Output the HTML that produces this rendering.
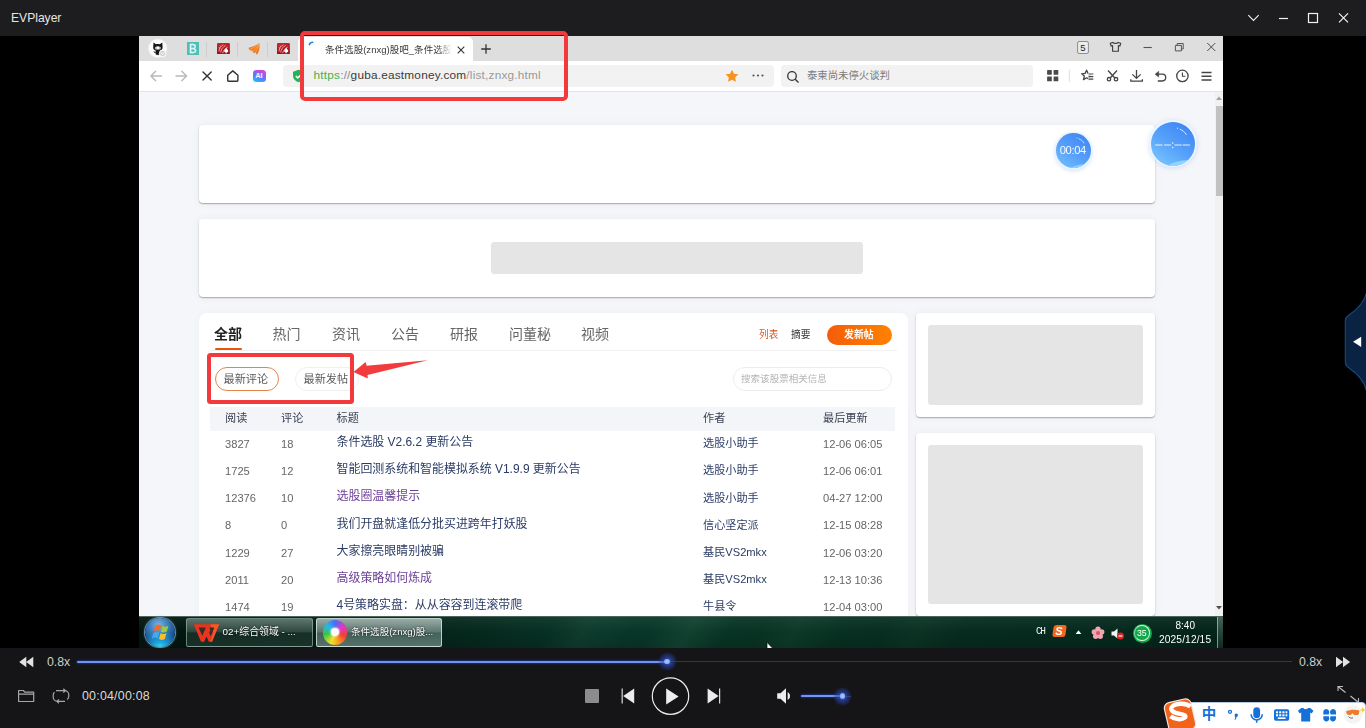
<!DOCTYPE html>
<html><head><meta charset="utf-8"><title>EVPlayer</title>
<style>
*{box-sizing:border-box}
html,body{margin:0;padding:0}
html{overflow:hidden;width:1366px;height:728px}
body{width:1366px;height:728px;overflow:hidden;position:relative;background:#000;font-family:"Liberation Sans","Noto Sans CJK SC",sans-serif;}
.a{position:absolute}
.t{position:absolute;white-space:nowrap;line-height:1}
.b{font-weight:bold}
#titlebar{left:0;top:0;width:1366px;height:36px;background:#1d1d20}
#ctrl{left:0;top:648px;width:1366px;height:80px;background:#151517}
#vid{left:139px;top:36px;width:1083.5px;height:612px;background:#f5f6fa;overflow:hidden}
/* coordinates inside #vid are page coords minus (139,36) -> we use a wrapper shifted back */
#v{position:absolute;left:-139px;top:-36px;width:1366px;height:728px;filter:blur(.4px)}
.card{position:absolute;background:#fff;border-radius:4px;box-shadow:0 1px 1.5px rgba(0,0,0,.32),0 0 10px rgba(0,0,0,.05)}
.sk{position:absolute;background:#e5e5e5;border-radius:3px}
.r{font-size:11.15px;color:#666}
.ti{font-size:11.950px}
.lk{color:#2b3b66}
.vis{color:#6d3f98}
#root{position:absolute;left:0;top:0;width:1366px;height:728px;overflow:hidden}
</style></head><body><div id="root">
<!-- ===== player title bar ===== -->
<div class="a" id="titlebar"></div>
<div class="t" style="left:11.300px;top:11px;font-size:13px;color:#e6e6e6;transform:scaleX(.93);transform-origin:0 0">EVPlayer</div>
<svg class="a" style="left:1240px;top:6px" width="120" height="24" viewBox="1240 6 120 24" fill="none" stroke="#f2f2f2"><path d="M1248.300 15.200l5.200 5.200 5.200-5.200" stroke-width="1.100"/><path d="M1279 18.500h9" stroke-width="1.200"/><rect x="1308.500" y="13.500" width="9" height="9" stroke-width="1.200"/><path d="M1339 13.300l9 9m0-9l-9 9" stroke-width="1.200"/></svg>

<!-- ===== video area ===== -->
<div class="a" id="vid"><div id="v">
<!-- browser tab bar -->
<div class="a" style="left:133px;top:30px;width:1096px;height:31.500px;background:#dedede"></div>
<!-- active tab -->
<div class="a" style="left:298px;top:37px;width:175px;height:25px;background:#fff;border-radius:5px 5px 0 0"></div>
<!-- toolbar -->
<div class="a" style="left:133px;top:61px;width:1096px;height:31px;background:#fff;border-bottom:1px solid #e3e4e6"></div>
<!-- avatar -->
<svg class="a" style="left:146px;top:37px" width="24" height="23" viewBox="146 37 24 23"><circle cx="157.700" cy="48.300" r="9.300" fill="#fbfbfb" stroke="#ebebeb" stroke-width=".6"/>
<path d="M153.200 47.600l.3-5 2.500 1.700c1.200-.3 2.600-.3 3.800 0l2.500-1.700.3 5c0 1.700-1 2.600-2.600 2.800h-4.200c-1.600-.2-2.600-1.100-2.600-2.800z" fill="#161616"/>
<ellipse cx="157.900" cy="48.100" rx="3" ry="1.900" fill="#bdbdbd"/><ellipse cx="157.900" cy="47.700" rx="1.300" ry="1.200" fill="#fff"/>
<path d="M156 50.200h3.800v3.600c0 .5-.3.800-.8.800h-2.200c-.5 0-.8-.3-.8-.8zM155.800 52.600c-1 .1-1.600-.4-2-1.200" fill="#161616" stroke="#161616" stroke-width=".8"/>
<circle cx="162.600" cy="53.500" r="3.300" fill="#d3d3d3" stroke="#fff" stroke-width=".9"/><path d="M161.100 52.700l1.500 1.700 1.500-1.700" stroke="#fff" stroke-width=".9" fill="none"/></svg>
<!-- B icon -->
<div class="a" style="left:186.700px;top:42.100px;width:12.600px;height:12.900px;background:#50bdb6"></div>
<div class="t" style="left:189.400px;top:43.200px;font-size:12.700px;color:#dcfbf8;transform:scaleX(.92);transform-origin:0 0;-webkit-text-stroke:.35px #dcfbf8">B</div>
<div class="a" style="left:206px;top:42px;width:1px;height:15px;background:#cdcdcd"></div>
<svg class="a" style="left:216.900px;top:42.900px" width="12.900" height="11.600" viewBox="0 0 26 23"><defs><linearGradient id="rg216" x1="0" y1="0" x2="0" y2="1"><stop offset="0" stop-color="#c4252b"/><stop offset="1" stop-color="#96121a"/></linearGradient></defs><rect width="26" height="23" rx="2.200" fill="url(#rg216)"/><path d="M4 17C4.500 10 8 5 13 3.500M7.500 19c1-7 4.500-12 10-14M11.500 20.500c1.500-6 5-10.500 10-12M3.500 9l3 1.500M6 5l2 2.500" stroke="#f3b4b4" stroke-width="1.700" fill="none"/><path d="M18.500 9.500l4 5.500a2.800 2.800 0 0 1-3.200 3.300l.7 2.200h-3l.7-2.200a2.800 2.800 0 0 1-3.200-3.300z" fill="#fff"/></svg>
<div class="a" style="left:237px;top:42px;width:1px;height:15px;background:#cdcdcd"></div>
<svg class="a" style="left:247.500px;top:42px" width="12" height="13" viewBox="247.500 42 12 13"><path d="M258.700 43.200c.9 3.800.2 8-2.100 11.400-1-.6-1.400-1.400-1.600-2.400-.6.500-1.500.6-2.400.2-.5-.5-.7-1.100-.7-1.800-1 .3-2 .1-2.700-.5-.6-.7-1-1.400-1.200-2.300 3.600-.7 7.500-2.300 10.700-4.600z" fill="#ee7a1c"/><path d="M249.300 49.300c3.300-1 6.300-2.800 8.900-5.200M251.900 51.500c2.700-1.800 4.900-4.200 6.300-7M254.700 52.600c1.900-2.500 3.100-5.300 3.600-8.300" stroke="#f8b276" stroke-width=".7" fill="none"/></svg>
<div class="a" style="left:267px;top:42px;width:1px;height:15px;background:#cdcdcd"></div>
<svg class="a" style="left:277.200px;top:42.900px" width="12.900" height="11.600" viewBox="0 0 26 23"><defs><linearGradient id="rg277" x1="0" y1="0" x2="0" y2="1"><stop offset="0" stop-color="#c4252b"/><stop offset="1" stop-color="#96121a"/></linearGradient></defs><rect width="26" height="23" rx="2.200" fill="url(#rg277)"/><path d="M4 17C4.500 10 8 5 13 3.500M7.500 19c1-7 4.500-12 10-14M11.500 20.500c1.500-6 5-10.500 10-12M3.500 9l3 1.500M6 5l2 2.500" stroke="#f3b4b4" stroke-width="1.700" fill="none"/><path d="M18.500 9.500l4 5.500a2.800 2.800 0 0 1-3.200 3.300l.7 2.200h-3l.7-2.200a2.800 2.800 0 0 1-3.200-3.300z" fill="#fff"/></svg>
<!-- tab content -->
<svg class="a" style="left:307px;top:40px" width="10" height="10" viewBox="0 0 10 10"><path d="M2.300 4.600A3.800 3.800 0 0 1 5.800 2.200" stroke="#2f80d8" stroke-width="1.500" fill="none" stroke-linecap="round"/></svg>
<div class="t" style="left:325px;top:42.500px;padding:2px 0 3px;font-size:9.560px;color:#3a3a3a;width:127px;overflow:hidden;-webkit-mask-image:linear-gradient(90deg,#000 88%,transparent 100%)">条件选股(znxg)股吧_条件选股吧</div>
<svg class="a" style="left:456px;top:44.500px" width="10" height="10" viewBox="0 0 10 10"><path d="M1.700 1.700l6.600 6.600m0-6.600l-6.600 6.600" stroke="#333" stroke-width="1.100"/></svg>
<svg class="a" style="left:480px;top:42.500px" width="12" height="12" viewBox="0 0 12 12"><path d="M6 1.200v9.600M1.200 6h9.600" stroke="#333" stroke-width="1.300"/></svg>
<!-- browser window buttons -->
<svg class="a" style="left:1070px;top:38px" width="152" height="20" viewBox="1070 38 152 20" fill="none" stroke="#555" stroke-width="1">
<rect x="1077.600" y="41.500" width="10.800" height="12" rx="1.500" fill="#ececec" stroke="#8e8e8e"/>
<path d="M1110.300 43.300l2.800-.9c.6 1.300 4.200 1.300 4.800 0l2.800.9-.8 2.700-1.500-.4v5.600h-5.800v-5.600l-1.500.4z" stroke="#3c3c3c" stroke-width="1.100"/>
<path d="M1143.500 47.500h8.300" stroke="#555" stroke-width="1.100"/>
<path d="M1175.400 45.400h6v5.500h-6zM1177.200 45.400v-1.900h6v5.500h-1.800" stroke="#555"/>
<path d="M1207.300 43l8 8m0-8l-8 8" stroke="#4a4a4a"/>
</svg>
<div class="t" style="left:1080.300px;top:42.800px;font-size:9.500px;color:#222">5</div>
<!-- nav icons -->
<svg class="a" style="left:148px;top:68px" width="124" height="16" viewBox="0 0 124 16" fill="none" stroke-linecap="round" stroke-linejoin="round">
<path d="M13.500 8h-10.500m4.700-4.800l-4.800 4.800 4.800 4.800" stroke="#b9b9b9" stroke-width="1.400"/>
<path d="M28 8h10.500m-4.700-4.800l4.800 4.800-4.800 4.800" stroke="#b9b9b9" stroke-width="1.400"/>
<path d="M55 3.900l8.200 8.200m0-8.200l-8.200 8.200" stroke="#333" stroke-width="1.400"/>
<path d="M79.700 7.300l5.100-4.400 5.100 4.400v5.300c0 .4-.3.700-.7.700h-8.800c-.4 0-.7-.3-.7-.7z" stroke="#333" stroke-width="1.400"/>
</svg>
<div class="a" style="left:252.500px;top:69.500px;width:13px;height:12.500px;border-radius:3.500px;background:linear-gradient(205deg,#f23cb0 0%,#a456f2 32%,#4a86ff 62%,#1ccfee 100%)"></div>
<div class="t" style="left:255.300px;top:72px;font-size:7.500px;font-weight:bold;color:#eef6ff;letter-spacing:-.3px">AI</div>
<!-- url box -->
<div class="a" style="left:283px;top:65px;width:490.500px;height:22px;background:#f2f2f2;border-radius:4px"></div>
<svg class="a" style="left:291.500px;top:69px" width="13" height="14" viewBox="0 0 13 14"><path d="M6.500 .8l5.500 2v4.200c0 3-2.300 5.200-5.500 6.300-3.200-1.100-5.500-3.300-5.500-6.300v-4.200z" fill="#1fb457"/><path d="M3.800 7l2 2 3.600-3.700" stroke="#fff" stroke-width="1.500" fill="none"/></svg>
<div class="t" id="url" style="left:313.500px;top:69.700px;font-size:11.800px;color:#999;letter-spacing:.21px"><span style="color:#47b04b">https</span><span style="color:#8a8a8a">://</span><span style="color:#3a3a3a">guba.eastmoney.com</span>/list,znxg.html</div>
<svg class="a" style="left:725px;top:69px" width="14" height="14" viewBox="0 0 14 14"><path d="M7 .7l1.950 4 4.400.6-3.200 3.100.8 4.400-3.950-2.100-3.950 2.100.8-4.400-3.200-3.100 4.400-.6z" fill="#f7931e"/></svg>
<svg class="a" style="left:751px;top:73px" width="14" height="5" viewBox="0 0 14 5" fill="#555"><circle cx="2.500" cy="2.500" r="1.100"/><circle cx="7" cy="2.500" r="1.100"/><circle cx="11.500" cy="2.500" r="1.100"/></svg>
<!-- search box -->
<div class="a" style="left:780.500px;top:65px;width:252px;height:22px;background:#f2f2f2;border-radius:4px"></div>
<svg class="a" style="left:786px;top:69.500px" width="14" height="14" viewBox="0 0 14 14" fill="none" stroke="#333" stroke-width="1.300"><circle cx="6" cy="6" r="4.300"/><path d="M9.200 9.200l3.300 3.300"/></svg>
<div class="t" style="left:807px;top:70.600px;font-size:10.360px;color:#7c7c7c">泰柬尚未停火谈判</div>
<!-- right toolbar icons -->
<svg class="a" style="left:1040px;top:64px" width="180" height="24" viewBox="1040 64 180 24" fill="none" stroke="#444" stroke-width="1.300" stroke-linejoin="round">
<g fill="#4a4a4a" stroke="none"><rect x="1047.100" y="70" width="4.700" height="4.700" rx=".4"/><rect x="1053.600" y="70" width="4.700" height="4.700" rx=".4"/><rect x="1047.100" y="76.600" width="4.700" height="4.700" rx=".4"/><rect x="1053.600" y="76.600" width="4.700" height="4.700" rx=".4"/></g>
<path d="M1069.300 69.500v12.500" stroke="#dedede" stroke-width="1"/>
<path d="M1086.600 70.200l1.500 3.200 3.400.4-2.600 2.300.8 3.500-3.100-1.800-3.100 1.800.8-3.500-2.600-2.300 3.400-.4z" stroke-width="1.300"/>
<path d="M1088.200 74h5.300M1088.200 76.600h5.300M1088.200 79.200h5.300" stroke="#fff" stroke-width="2.400"/>
<path d="M1088.600 74h4.700M1088.600 76.600h4.700M1088.600 79.200h4.700" stroke-width="1.200"/>
<circle cx="1109" cy="79.200" r="1.700"/><circle cx="1116" cy="79.200" r="1.700"/><path d="M1110.200 78l6.800-7.500M1114.800 78l-6.800-7.500"/>
<path d="M1136.500 70v8.200m-4.100-3.800l4.100 4 4.100-4M1130.800 79.300v1.900h11.600v-1.900"/>
<path d="M1156.500 74.200h5.800a3.400 3.400 0 0 1 0 6.800h-4.500"/><path d="M1158.700 71.300l-3.600 2.900 3.600 2.900z" fill="#444" stroke-width=".5"/>
<circle cx="1182.400" cy="75.900" r="5.700"/><path d="M1182.400 72.500v3.800h3" stroke-width="1.100"/>
<path d="M1201.500 72.500h10M1201.500 76.300h10M1201.500 80.100h10" stroke-width="1.500"/>
</svg>
<!-- page scrollbar -->
<div class="a" style="left:1215px;top:91.500px;width:12px;height:525px;background:#f1f1f2"></div>
<div class="a" style="left:1215.500px;top:105.500px;width:11px;height:90px;background:#c1c1c1"></div>
<svg class="a" style="left:1215px;top:94px" width="8" height="8" viewBox="0 0 8 8"><path d="M1 6l3-3.500 3 3.500z" fill="#a3a3a3"/></svg>
<svg class="a" style="left:1215px;top:604px" width="8" height="8" viewBox="0 0 8 8"><path d="M1 2l3 3.500 3-3.500z" fill="#505050"/></svg>
<!-- page cards -->
<div class="card" style="left:198.500px;top:125px;width:956px;height:78px"></div>
<div class="card" style="left:198.500px;top:219.200px;width:956px;height:78.300px"></div>
<div class="sk" style="left:490.500px;top:242px;width:372.500px;height:31.500px"></div>
<!-- main list card -->
<div class="a" style="left:198.500px;top:313.200px;width:709px;height:320px;background:#fff;border-radius:8px;box-shadow:0 0 8px rgba(0,0,0,.03)"></div>
<!-- right cards -->
<div class="card" style="left:916px;top:313.200px;width:239px;height:103.800px"></div>
<div class="sk" style="left:928px;top:325px;width:215px;height:80px"></div>
<div class="card" style="left:916px;top:433px;width:239px;height:182.500px"></div>
<div class="sk" style="left:928px;top:445px;width:215px;height:158.500px"></div>
<!-- tabs -->
<div class="t b" style="left:214px;top:326.800px;font-size:14px;color:#222">全部</div>
<div class="t" style="left:272.500px;top:326.800px;font-size:14px;color:#666">热门</div>
<div class="t" style="left:332px;top:326.800px;font-size:14px;color:#666">资讯</div>
<div class="t" style="left:391px;top:326.800px;font-size:14px;color:#666">公告</div>
<div class="t" style="left:450px;top:326.800px;font-size:14px;color:#666">研报</div>
<div class="t" style="left:509px;top:326.800px;font-size:14px;color:#666">问董秘</div>
<div class="t" style="left:581px;top:326.800px;font-size:14px;color:#666">视频</div>
<div class="a" style="left:214.500px;top:347.800px;width:27px;height:2.200px;background:#ea5504;border-radius:1px"></div>
<div class="a" style="left:209.500px;top:350px;width:687px;height:1px;background:#f1f1f1"></div>
<div class="t" style="left:759px;top:330px;font-size:9.700px;color:#e2541a">列表</div>
<div class="t" style="left:791px;top:330px;font-size:9.700px;color:#333">摘要</div>
<div class="a" style="left:826.500px;top:324.500px;width:65.500px;height:20.500px;border-radius:11px;background:linear-gradient(90deg,#f55c0a,#ff8200)"></div>
<div class="t b" style="left:844px;top:329.800px;font-size:9.900px;color:#fff">发新帖</div>
<!-- filter pills -->
<div class="a" style="left:214.500px;top:367px;width:64px;height:23.500px;border-radius:12px;border:1px solid #e8834a;background:#fff"></div>
<div class="t" style="left:223.500px;top:373.500px;font-size:11.150px;color:#5a5a5a">最新评论</div>
<div class="a" style="left:294.500px;top:367px;width:64px;height:23.500px;border-radius:12px;border:1px solid #efefef;background:#fff"></div>
<div class="t" style="left:303.500px;top:373.500px;font-size:11.150px;color:#5a5a5a">最新发帖</div>
<!-- search input -->
<div class="a" style="left:732.500px;top:367px;width:159px;height:23.500px;border-radius:12px;border:1px solid #ececec;background:#fff"></div>
<div class="t" style="left:741px;top:374.200px;font-size:9.560px;color:#b4b4b4">搜索该股票相关信息</div>
<!-- table header -->
<div class="a" style="left:209.500px;top:406.500px;width:685.500px;height:24px;background:#f3f5f8"></div>
<div class="t" style="left:225px;top:413px;font-size:11.150px;color:#3a4152">阅读</div>
<div class="t" style="left:281px;top:413px;font-size:11.150px;color:#3a4152">评论</div>
<div class="t" style="left:336.500px;top:413px;font-size:11.150px;color:#3a4152">标题</div>
<div class="t" style="left:703px;top:413px;font-size:11.150px;color:#3a4152">作者</div>
<div class="t" style="left:823px;top:413px;font-size:11.150px;color:#3a4152">最后更新</div>
<div class="t r" style="left:225px;top:439.1px">3827</div><div class="t r" style="left:281px;top:439.1px">18</div><div class="t r ti lk" style="left:336.500px;top:437.2px">条件选股 V2.6.2 更新公告</div><div class="t r lk" style="left:703px;top:438.3px">选股小助手</div><div class="t r" style="left:823px;top:439.1px">12-06 06:05</div>
<div class="t r" style="left:225px;top:466.2px">1725</div><div class="t r" style="left:281px;top:466.2px">12</div><div class="t r ti lk" style="left:336.500px;top:464.3px">智能回测系统和智能模拟系统 V1.9.9 更新公告</div><div class="t r lk" style="left:703px;top:465.4px">选股小助手</div><div class="t r" style="left:823px;top:466.2px">12-06 06:01</div>
<div class="t r" style="left:225px;top:493.3px">12376</div><div class="t r" style="left:281px;top:493.3px">10</div><div class="t r ti vis" style="left:336.500px;top:491.4px">选股圈温馨提示</div><div class="t r lk" style="left:703px;top:492.5px">选股小助手</div><div class="t r" style="left:823px;top:493.3px">04-27 12:00</div>
<div class="t r" style="left:225px;top:520.4px">8</div><div class="t r" style="left:281px;top:520.4px">0</div><div class="t r ti lk" style="left:336.500px;top:518.5px">我们开盘就逢低分批买进跨年打妖股</div><div class="t r lk" style="left:703px;top:519.6px">信心坚定派</div><div class="t r" style="left:823px;top:520.4px">12-15 08:28</div>
<div class="t r" style="left:225px;top:547.5px">1229</div><div class="t r" style="left:281px;top:547.5px">27</div><div class="t r ti lk" style="left:336.500px;top:545.6px">大家擦亮眼睛别被骗</div><div class="t r lk" style="left:703px;top:546.7px">基民VS2mkx</div><div class="t r" style="left:823px;top:547.5px">12-06 03:20</div>
<div class="t r" style="left:225px;top:574.5px">2011</div><div class="t r" style="left:281px;top:574.5px">20</div><div class="t r ti vis" style="left:336.500px;top:572.6px">高级策略如何炼成</div><div class="t r lk" style="left:703px;top:573.7px">基民VS2mkx</div><div class="t r" style="left:823px;top:574.5px">12-13 10:36</div>
<div class="t r" style="left:225px;top:601.6px">1474</div><div class="t r" style="left:281px;top:601.6px">19</div><div class="t r ti lk" style="left:336.500px;top:599.7px">4号策略实盘：从从容容到连滚带爬</div><div class="t r lk" style="left:703px;top:600.8px">牛县令</div><div class="t r" style="left:823px;top:601.6px">12-04 03:00</div>

<!-- floating timers -->
<div class="a" style="left:1054.600px;top:132.100px;width:37.600px;height:37.600px;border-radius:50%;background:#e9f4ff;box-shadow:0 1px 4px rgba(60,120,220,.22)"></div>
<div class="a" style="left:1055.900px;top:133.400px;width:35px;height:35px;border-radius:50%;background:linear-gradient(215deg,#3f86f4 8%,#57a0fa 55%,#74c2ff 100%);overflow:hidden"><div class="a" style="left:12px;top:30.500px;width:40px;height:16px;border-radius:50%;background:#8ad0ff"></div></div>
<svg class="a" style="left:1055.900px;top:133.400px" width="35" height="35" viewBox="0 0 35 35" fill="none" stroke="#fff"><path d="M23 5.800c2.300.9 4 2.400 5 4.200" stroke-width=".9" opacity=".75" stroke-linecap="round"/><circle cx="21" cy="4.900" r=".5" fill="#fff" stroke="none" opacity=".8"/></svg>
<div class="t" style="left:1059.700px;top:145.300px;font-size:11.200px;color:#f4f9ff;letter-spacing:-.35px">00:04</div>
<div class="a" style="left:1149.300px;top:120px;width:47.400px;height:47.400px;border-radius:50%;background:#edf6ff;box-shadow:0 1px 5px rgba(60,120,220,.22)"></div>
<div class="a" style="left:1151.200px;top:121.800px;width:43.800px;height:43.800px;border-radius:50%;background:linear-gradient(215deg,#3c84f4 8%,#58a3fb 55%,#80ccff 100%);overflow:hidden"><div class="a" style="left:14px;top:38.500px;width:52px;height:20px;border-radius:50%;background:#8fd4ff"></div></div>
<svg class="a" style="left:1151.200px;top:121.800px" width="44" height="44" viewBox="0 0 44 44" fill="none" stroke="#fff"><path d="M4.200 23h7.300M13 23h7.100M23.400 23h7.300M31.700 23h7.300" stroke-width=".9" opacity=".95"/><circle cx="21.700" cy="21" r=".7" fill="#fff" stroke="none"/><circle cx="21.700" cy="25.500" r=".7" fill="#fff" stroke="none"/><path d="M29 7.300c3 1.200 5 3 6.300 5.300" stroke-width="1" opacity=".75" stroke-linecap="round"/><circle cx="26.500" cy="6.200" r=".6" fill="#fff" stroke="none" opacity=".8"/></svg>
<!-- win7 taskbar -->
<div class="a" style="left:133px;top:616px;width:1096px;height:38px;background:linear-gradient(90deg,#04150f 0,#051c15 15%,#06281d 30%,#09382a 44%,#083424 58%,#072d20 74%,#062a1e 88%,#05241a 100%)"></div>
<div class="a" style="left:133px;top:616px;width:1096px;height:38px;background:linear-gradient(118deg,transparent 38%,rgba(120,190,150,.06) 41%,transparent 45%,transparent 47%,rgba(120,190,150,.09) 50.500%,transparent 54%,transparent 57%,rgba(120,190,150,.05) 60%,transparent 64%,transparent 68%,rgba(120,190,150,.04) 71%,transparent 75%),linear-gradient(180deg,rgba(255,255,255,.06) 0,rgba(255,255,255,0) 40%,rgba(0,0,0,.18) 100%)"></div>
<div class="a" style="left:133px;top:616px;width:1096px;height:1px;background:#4d665d"></div>
<!-- start orb -->
<div class="a" style="left:145.300px;top:617.800px;width:29.600px;height:29.600px;border-radius:50%;background:radial-gradient(circle at 50% 105%,#3fe0f5 0,#1aa0d8 22%,rgba(20,100,170,0) 55%),radial-gradient(circle at 45% 25%,#7fb5e0 0,#3a7cba 35%,#184f8c 65%,#0f3d70 100%);box-shadow:0 0 0 1px rgba(150,200,235,.6),0 0 3px 1px rgba(90,160,210,.35)"></div>
<svg class="a" style="left:151.500px;top:621.500px" width="20" height="22" viewBox="0 0 20 22"><path d="M3.200 3.600c2.100-1.500 4.100-1.500 6-.4l-1.500 5.800c-1.900-1.100-3.900-1.100-6 .4z" fill="#f26a2c"/><path d="M10.400 3.900c1.900 1.100 3.900 1.100 6-.4l-1.500 5.800c-2.100 1.500-4.100 1.500-6 .4z" fill="#9bcc3f"/><path d="M1.300 11c2.100-1.500 4.100-1.500 6-.4l-1.500 5.800c-1.900-1.100-3.900-1.100-6 .4z" fill="#46a8ea"/><path d="M8.500 11.300c1.900 1.100 3.900 1.100 6-.4l-1.500 5.800c-2.100 1.500-4.100 1.500-6 .4z" fill="#fcbc2c"/></svg>
<!-- task buttons -->
<div class="a" style="left:186px;top:617.500px;width:126.500px;height:29px;border-radius:2.500px;border:1px solid rgba(160,185,175,.62);background:linear-gradient(180deg,rgba(170,195,185,.5),rgba(110,140,130,.42) 46%,rgba(45,75,66,.42) 52%,rgba(50,80,70,.45))"></div>
<svg class="a" style="left:192px;top:622px" width="30" height="22" viewBox="192 622 30 22"><path d="M193.800 624.300h25.400l-7.200 17.500h-3.200l-2.300-5.400-2.300 5.400h-3.200z" fill="#e8351d"/><path d="M210.500 624.300h8.700l-7.200 17.500h-1.600l3-9z" fill="#f4602a" opacity=".85"/><path d="M198.600 627.500h7.200l-3.500 8.300z" fill="#3a2a28"/><path d="M209.200 627.500h5.200l-3.700 8.700-1.500-3.300 1.200-2.900z" fill="#3a2a28"/></svg>
<div class="t" style="left:222.500px;top:627.100px;font-size:9.900px;color:#fff;text-shadow:0 0 2px #000">02+综合领域 - ...</div>
<div class="a" style="left:315.500px;top:617.500px;width:126.500px;height:29px;border-radius:2.500px;border:1px solid rgba(215,230,225,.8);background:linear-gradient(180deg,rgba(200,215,210,.75),rgba(140,165,158,.65) 48%,rgba(95,125,118,.7) 52%,rgba(120,150,142,.7))"></div>
<div class="a" style="left:322.800px;top:620.200px;width:24.400px;height:24.400px;border-radius:50%;background:conic-gradient(from 0deg,#4a6cf5,#e535c8 55deg,#f2402f 110deg,#f8a51e 165deg,#f2e030 200deg,#35c545 260deg,#25b5ee 315deg,#4a6cf5)"></div>
<div class="a" style="left:331px;top:628.400px;width:8px;height:8px;border-radius:50%;background:#fafafa;box-shadow:0 0 2px 1px rgba(255,255,255,.55)"></div>
<div class="t" style="left:351px;top:627.300px;font-size:9.560px;color:#fff;text-shadow:0 0 2px #000">条件选股(znxg)股...</div>
<!-- tray -->
<div class="t" style="left:1036px;top:625.800px;font-size:10.500px;color:#f2f2f2;font-family:'Liberation Mono',monospace;letter-spacing:-1.5px;transform:scaleX(.9);transform-origin:0 0">CH</div>
<div class="a" style="left:1053px;top:625px;width:12.500px;height:12px;border-radius:2.500px;background:#f4661b;transform:skewX(-8deg)"></div>
<div class="t" style="left:1055.300px;top:625.500px;font-size:11px;font-weight:bold;color:#fff;font-style:italic">S</div>
<svg class="a" style="left:1075px;top:629px" width="7" height="6" viewBox="0 0 7 6"><path d="M.7 5l2.800-3.800 2.800 3.800z" fill="#fff"/></svg>
<svg class="a" style="left:1091px;top:626px" width="14" height="14" viewBox="0 0 14 14"><g fill="#f0a6ae"><circle cx="7" cy="3.300" r="2.700"/><circle cx="3.300" cy="6" r="2.700"/><circle cx="10.700" cy="6" r="2.700"/><circle cx="4.700" cy="10.300" r="2.700"/><circle cx="9.300" cy="10.300" r="2.700"/></g><circle cx="7" cy="7" r="2" fill="#d85a66"/></svg>
<svg class="a" style="left:1110px;top:626px" width="15" height="15" viewBox="0 0 15 15"><path d="M1.500 5.500h2.500l3.500-3v10l-3.500-3h-2.500z" fill="#f2f2f2"/><circle cx="10.500" cy="10" r="3.400" fill="#e02020"/><path d="M8.600 10h3.800" stroke="#fff" stroke-width="1.200"/></svg>
<div class="a" style="left:1132.500px;top:623.500px;width:19px;height:19px;border-radius:50%;background:#12a84a"></div><div class="a" style="left:1134.300px;top:625.300px;width:15.400px;height:15.400px;border-radius:50%;border:1.300px solid #d9f5e3;border-left-color:#7fd7a0"></div>
<div class="t" style="left:1137px;top:628.700px;font-size:8.800px;color:#fff;letter-spacing:-.2px">35</div>
<div class="t" style="left:1175.500px;top:620.500px;font-size:10px;color:#fff">8:40</div>
<div class="t" style="left:1159px;top:634.500px;font-size:10.200px;color:#fff;letter-spacing:.12px">2025/12/15</div>
<div class="a" style="left:1217px;top:617px;width:6px;height:31px;border-left:1px solid rgba(190,215,205,.6);background:linear-gradient(180deg,rgba(120,150,140,.5),rgba(30,60,50,.4))"></div>
<!-- mouse cursor tip -->
<svg class="a" style="left:764px;top:640px" width="12" height="10" viewBox="764 640 12 10"><path d="M767 642.300v7.700h7.300z" fill="#fff" stroke="#0a0a0a" stroke-width=".7"/></svg>

</div></div>

<!-- ===== control bar ===== -->
<div class="a" id="ctrl"></div>
<!-- speed row -->
<svg class="a" style="left:17px;top:654px" width="20" height="16" viewBox="0 0 20 16" fill="#e2e2e2"><path d="M9.300 2.800v10.400l-7.100-5.200zM16.300 2.800v10.400l-7.100-5.200z"/></svg>
<div class="t" style="left:47px;top:655.600px;font-size:12.300px;color:#cfcfcf">0.8x</div>
<div class="a" style="left:77px;top:660.700px;width:1215px;height:1.800px;background:#39393b"></div>
<div class="a" style="left:77px;top:660.700px;width:590px;height:1.900px;background:#7396ea;border-radius:1px;box-shadow:0 0 2px .6px rgba(30,60,180,.9)"></div>
<div class="a" style="left:657.500px;top:652.100px;width:19px;height:19px;border-radius:50%;background:radial-gradient(circle,rgba(70,110,235,.95) 0,rgba(45,80,200,.6) 30%,rgba(35,60,160,.38) 55%,rgba(30,50,140,0) 72%)"></div><div class="a" style="left:664.300px;top:658.900px;width:5.400px;height:5.400px;border-radius:50%;background:radial-gradient(circle,#b6ceff 0,#7ea4f6 70%,#5f88e8 100%)"></div>
<div class="t" style="left:1299px;top:655.600px;font-size:12.300px;color:#cfcfcf">0.8x</div>
<svg class="a" style="left:1333px;top:654px" width="20" height="16" viewBox="0 0 20 16" fill="#e2e2e2"><path d="M3 2.800v10.400l7.100-5.200zM10 2.800v10.400l7.100-5.200z"/></svg>
<!-- bottom row -->
<svg class="a" style="left:14px;top:684px" width="60" height="24" viewBox="14 684 60 24" fill="none" stroke="#a6a6a6" stroke-width="1.200" stroke-linejoin="round"><path d="M18.600 690.500h4.800l1.300 1.600h9v9.400h-15.100zM18.600 694.200h15.100"/><path d="M56 690.600h8.500a4.300 4.300 0 0 1 4.300 4.300v1.300a4.300 4.300 0 0 1-1.600 3.300M65 701.400h-7.500a4.300 4.300 0 0 1-4.300-4.300v-1.900a4.300 4.300 0 0 1 1.300-3.100M63.300 688.700l2.200 1.900-2.200 1.900M59 703.300l-2.200-1.900 2.200-1.900"/></svg>
<div class="t" style="left:82px;top:689.500px;font-size:12.400px;color:#dcdcdc;letter-spacing:.22px">00:04/00:08</div>
<div class="a" style="left:585px;top:689px;width:14px;height:14px;background:#8c8c8c;border-radius:1px"></div>
<svg class="a" style="left:619px;top:686px" width="18" height="20" viewBox="0 0 18 20" fill="#ececec"><rect x="2.600" y="2.500" width="1.100" height="15"/><path d="M15.200 2.500v15l-11-7.500z"/></svg>
<svg class="a" style="left:650px;top:676px" width="40" height="40" viewBox="0 0 40 40"><circle cx="20.500" cy="20.100" r="18.200" fill="none" stroke="#ececec" stroke-width="1.200"/><path d="M16.200 12.400v16l12.400-8z" fill="#efefef"/></svg>
<svg class="a" style="left:705px;top:686px" width="18" height="20" viewBox="0 0 18 20" fill="#ececec"><rect x="14.100" y="2.500" width="1.100" height="15"/><path d="M2.600 2.500v15l11-7.500z"/></svg>
<svg class="a" style="left:775px;top:686px" width="18" height="20" viewBox="0 0 18 20"><path d="M2.200 7.300h3.300l5.500-5v15.400l-5.500-5h-3.300z" fill="#ededed"/><path d="M12.600 6.200c3.200 1 3.200 6.600 0 7.600z" fill="#ededed"/></svg>
<div class="a" style="left:801px;top:695.600px;width:50px;height:1.200px;background:#3d3d3f"></div><div class="a" style="left:801px;top:695.200px;width:41px;height:1.900px;background:#7396ea;border-radius:1px;box-shadow:0 0 2px .6px rgba(30,60,180,.9)"></div>
<div class="a" style="left:832.800px;top:686.600px;width:19px;height:19px;border-radius:50%;background:radial-gradient(circle,rgba(70,110,235,.95) 0,rgba(45,80,200,.6) 30%,rgba(35,60,160,.38) 55%,rgba(30,50,140,0) 72%)"></div><div class="a" style="left:839.600px;top:693.400px;width:5.400px;height:5.400px;border-radius:50%;background:radial-gradient(circle,#b6ceff 0,#7ea4f6 70%,#5f88e8 100%)"></div>
<svg class="a" style="left:1335px;top:684px" width="26" height="20" viewBox="0 0 26 20" fill="none" stroke="#bdbdbd" stroke-width="1.100"><path d="M3 2.500l7.500 6M3 7v-4.500h5M15.500 12l8 6.500M23.500 14v4.500h-5"/></svg>
<!-- sogou ime bar -->
<div class="a" style="left:1176px;top:702px;width:189.500px;height:27px;background:#fff;border:1px solid #b9cbe4;border-radius:3px 4px 0 0"></div>
<div class="a" style="left:1167px;top:700.500px;width:26px;height:30px;border-radius:5px;background:#f2631c;transform:rotate(-13deg);box-shadow:0 0 0 1.200px #fbe3d5"></div>
<svg class="a" style="left:1164px;top:697px" width="34" height="31" viewBox="1164 697 34 31"><path d="M1190.500 706.500c-4-3.300-13.500-3.800-17.500-.6-4.500 3.600 0 6.700 6 7.700 5.500.9 8 2.300 5.500 4.300-3 2.300-10 1.500-14-1.700" fill="none" stroke="#fff" stroke-width="4.300" stroke-linecap="butt"/></svg>
<div class="t b" style="left:1201.800px;top:706.800px;font-size:14.500px;color:#1570d8">中</div>
<svg class="a" style="left:1226px;top:704px" width="140" height="24" viewBox="1226 704 140 24" fill="#1570d8">
<circle cx="1230" cy="711.800" r="1.500" fill="none" stroke="#1570d8" stroke-width="1.300"/><path d="M1234.600 715.300a1.700 1.700 0 1 1 1.900 1.600c0 1.600-.8 2.700-2.200 3.300.7-.9 1-1.800.9-2.900z"/>
<rect x="1253.300" y="707.200" width="6.800" height="11" rx="3.400"/><path d="M1251.100 714.300a5.600 5.600 0 0 0 11.200 0M1256.700 720v2.800" fill="none" stroke="#1570d8" stroke-width="1.500"/>
<rect x="1274" y="709.200" width="15.200" height="11.600" rx="1.800"/><g fill="#fff"><rect x="1276" y="711.300" width="2.100" height="2"/><rect x="1279.200" y="711.300" width="2.100" height="2"/><rect x="1282.400" y="711.300" width="2.100" height="2"/><rect x="1285.600" y="711.300" width="1.700" height="2"/><rect x="1276" y="714.300" width="2.100" height="2"/><rect x="1279.200" y="714.300" width="2.100" height="2"/><rect x="1282.400" y="714.300" width="2.100" height="2"/><rect x="1285.600" y="714.300" width="1.700" height="2"/><rect x="1277.800" y="717.400" width="7.800" height="1.600"/></g>
<path d="M1301.300 708l2.200 0c.6 1.600 3.900 1.600 4.500 0l2.200 0 3.300 2.700-1.900 2.700-1.400-.9v8.900h-9v-8.900l-1.400.9-1.900-2.700z"/>
<path d="M1323.300 712.300a3 3 0 1 1 5.600 1.300v.8h-5.600zM1336 712.300a3 3 0 1 0-5.600 1.300v.8h5.600zM1323.300 718.300a3 3 0 1 0 5.600-1.300v-.8h-5.600zM1336 718.300a3 3 0 1 1-5.600-1.300v-.8h5.600z"/>
<circle cx="1353" cy="714.500" r="9.300" fill="#f4f4f4"/><path d="M1345.300 709.800l4-4.300 3.200 2.300M1360.600 709.800l-3.700-4.300-3.400 2.300" fill="#f4f4f4"/>
<path d="M1346.200 711.200c4-1.700 9-2 13.300-.8l-.9 4c-1.700.9-3.600.9-5 .1l-1.300-1.200-1.300 1.500c-1.500.6-3.200.3-4.300-.8z" fill="#ef7a2a"/><path d="M1348.500 716.500c1 1.500 3 2 4.500 1.300" stroke="#555" stroke-width=".9" fill="none"/><path d="M1362.800 706.700l.9 2.300 2.300.9-2.300.9-.9 2.300-.9-2.300-2.300-.9 2.300-.9z" fill="#f7d038"/>
</svg>


<!-- ===== annotations ===== -->
<div class="a" style="left:300.200px;top:31.300px;width:267.500px;height:69.400px;border:4px solid #f23a3c;border-radius:5px"></div>
<div class="a" style="left:207px;top:353.300px;width:147.200px;height:51.200px;border:4px solid #f23a3c;border-radius:3.500px"></div>
<svg class="a" style="left:350px;top:355px" width="85" height="30" viewBox="350 355 85 30"><path d="M353.500 372l12.100-9.900 1.100 3.600 61.100-5.500-60.300 14.700.3 3.700z" fill="#f23b3c"/></svg>
<!-- side tab -->
<svg class="a" style="left:1340px;top:288px" width="26" height="108" viewBox="1340 288 26 108"><path d="M1366.500 292.500c-2 9-8 16-17.500 22.500-2.500 1.700-3.700 3-3.700 5.500v42c0 2.500 1.200 3.800 3.700 5.500 9.500 6.500 15.500 13.500 17.500 23z" fill="#0b2342" stroke="#1c477c" stroke-width="1.100"/><path d="M1361.200 336.700v10.300l-8.100-5.150z" fill="#fff"/></svg>

</div></body></html>
